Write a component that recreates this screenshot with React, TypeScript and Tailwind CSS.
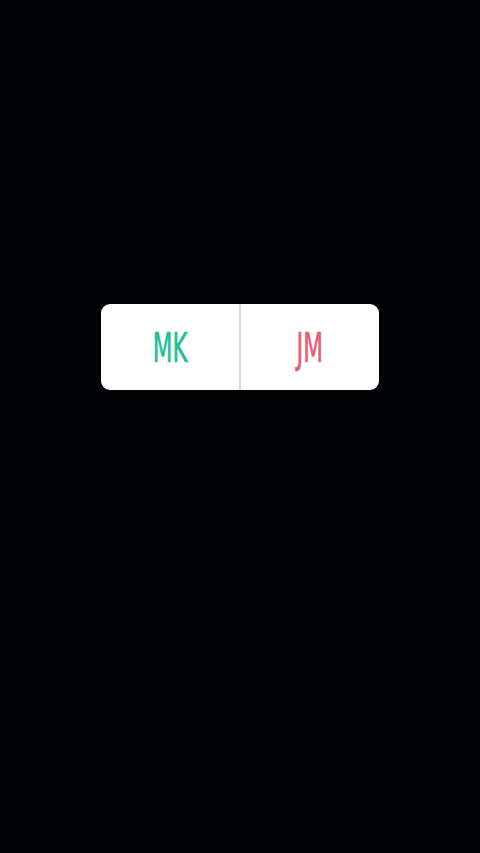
export default function App() {
  return (
    <div className="w-[480px] h-[853px] bg-[#020307] flex flex-col items-center pt-[304px]">
      <div className="w-[278px] h-[86px] bg-white rounded-[9px] flex overflow-hidden">
        <div className="flex-1 flex items-center justify-center pt-[3px]">
          <span className="text-[41px] leading-none text-[#22bf97] scale-x-[0.56] font-normal [-webkit-text-stroke:0.7px_#22bf97]" style={{ fontFamily: '"DejaVu Sans", sans-serif' }}>MK</span>
        </div>
        <div className="w-[2px] bg-[#d9d9d9]" />
        <div className="flex-1 flex items-center justify-center pt-[3px]">
          <span className="text-[41px] leading-none text-[#e75d74] scale-x-[0.56] font-normal [-webkit-text-stroke:0.7px_#e75d74]" style={{ fontFamily: '"DejaVu Sans", sans-serif' }}>JM</span>
        </div>
      </div>
    </div>
  );
}
